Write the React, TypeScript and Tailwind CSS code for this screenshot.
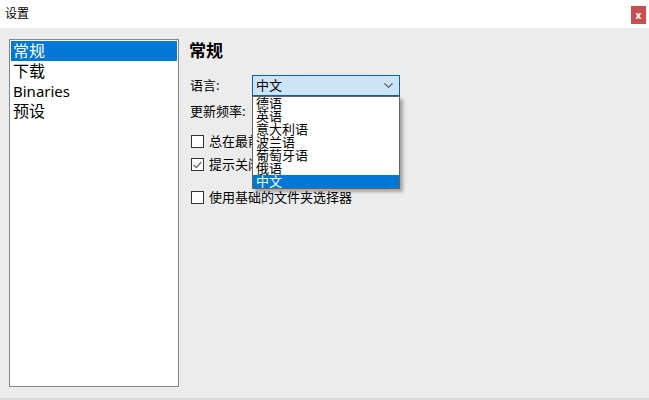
import React from 'react';

const font = { fontFamily: '"Noto Sans", "Noto Sans CJK SC", sans-serif' };

const languages = ['德语', '英语', '意大利语', '波兰语', '葡萄牙语', '俄语', '中文'];

const Checkbox: React.FC<{ checked?: boolean; label: string }> = ({ checked, label }) => (
  <div className="flex items-center h-[13px] pl-[2px]">
    <div className="w-[13px] h-[13px] border border-[#333333] bg-white flex items-center justify-center shrink-0">
      {checked && (
        <svg width="9" height="8" viewBox="0 0 9 8">
          <path d="M0.8 4 L3.3 6.6 L8.3 1" fill="none" stroke="#666666" strokeWidth="1.2" />
        </svg>
      )}
    </div>
    <span className="ml-[5px] text-[13px] leading-[13px] text-black whitespace-nowrap">{label}</span>
  </div>
);

const Chevron = () => (
  <svg width="9" height="5" viewBox="0 0 9 5">
    <path d="M0.5 0.5 L4.5 4.3 L8.5 0.5" fill="none" stroke="#555555" strokeWidth="1.1" />
  </svg>
);

export default function App() {
  return (
    <div className="w-[649px] h-[400px] flex flex-col overflow-hidden" style={font}>
      {/* title bar */}
      <div className="h-[28px] bg-white flex items-center justify-between shrink-0">
        <span className="ml-[5px] text-[12px] text-black">设置</span>
        <div className="mr-[3px] mt-[1px] w-[15px] h-[18px] bg-[#c75050] flex items-center justify-center">
          <span className="text-white text-[10px] font-bold leading-none">x</span>
        </div>
      </div>

      {/* body */}
      <div className="flex-1 bg-[#ececec] border-b-2 border-[#d9d9d9] flex pl-[9px] pt-[11px]">
        {/* side list */}
        <div className="w-[170px] h-[348px] border border-[#82878f] bg-white p-[1px] shrink-0">
          <div className="h-[20px] bg-[#0078d7] text-white text-[16px] leading-[20px] pl-[2px]">常规</div>
          <div className="h-[20px] text-black text-[16px] leading-[20px] pl-[2px]">下载</div>
          <div className="h-[20px] text-black text-[15px] leading-[20px] pl-[2px]">Binaries</div>
          <div className="h-[20px] text-black text-[16px] leading-[20px] pl-[2px]">预设</div>
        </div>

        {/* settings pane */}
        <div className="ml-[10px] flex flex-col">
          <div className="mt-[1px] h-[22px] text-[17px] leading-[22px] font-bold text-black">常规</div>

          {/* language */}
          <div className="mt-[13px] h-[21px] flex items-center">
            <span className="w-[63px] pl-[1px] text-[13px] text-black">语言:</span>
            <div className="relative">
              <div className="w-[148px] h-[21px] bg-[#cce4f7] border border-[#0c5fa9] flex items-center justify-between pl-[3px] pr-[6px]">
                <span className="text-[13px] leading-none text-black">中文</span>
                <Chevron />
              </div>
              {/* open dropdown */}
              <div className="absolute left-0 top-[21px] w-[148px] h-[93px] bg-white border border-[#646464] shadow-[3px_3px_3px_rgba(0,0,0,0.3)] z-10 flex flex-col">
                {languages.map((l, i) => (
                  <div
                    key={l}
                    className={
                      i === languages.length - 1
                        ? 'h-[14px] bg-[#0078d7] text-white text-[13px] leading-[13px] pl-[3px] whitespace-nowrap'
                        : 'h-[13px] text-black text-[13px] leading-[13px] pl-[3px] whitespace-nowrap'
                    }
                  >
                    {l}
                  </div>
                ))}
              </div>
            </div>
          </div>

          {/* update frequency */}
          <div className="mt-[5px] h-[21px] flex items-center">
            <span className="w-[63px] pl-[1px] text-[13px] text-black whitespace-nowrap">更新频率:</span>
            <div className="w-[148px] h-[21px] bg-[#e5e5e5] border border-[#adadad]" />
          </div>

          <div className="mt-[13px]">
            <Checkbox label="总在最前显示" />
          </div>
          <div className="mt-[10px]">
            <Checkbox checked label="提示关闭确认" />
          </div>
          <div className="mt-[20px]">
            <Checkbox label="使用基础的文件夹选择器" />
          </div>
        </div>
      </div>
    </div>
  );
}
